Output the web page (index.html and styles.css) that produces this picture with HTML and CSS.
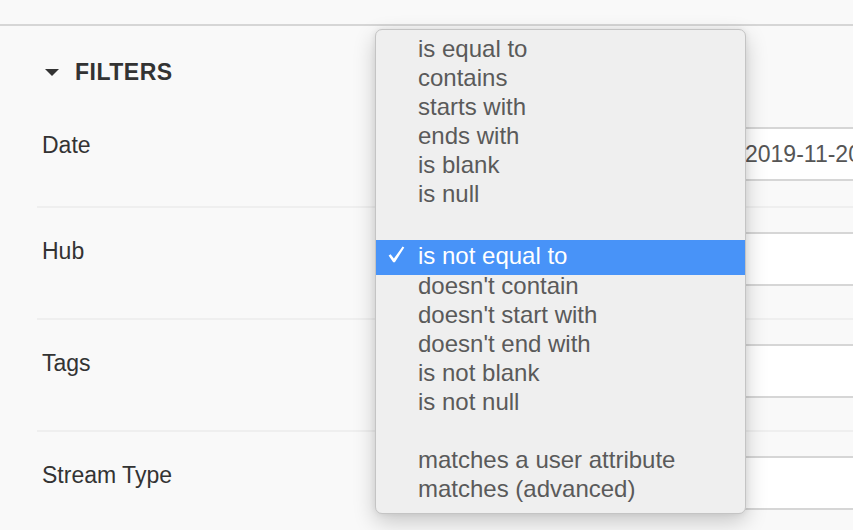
FILE: index.html
```html
<!DOCTYPE html>
<html lang="en">
<head>
<meta charset="utf-8">
<title>Filters</title>
<link rel="stylesheet" href="styles.css">
</head>
<body>
<div class="topbar"></div>
<section class="filters">
  <h2 class="filters-title">
    <svg class="caret" width="14" height="7" viewBox="0 0 14 7"><path d="M0 0H14L7 7Z" fill="#333"/></svg>
    <span>FILTERS</span>
  </h2>
  <div class="filter-row first">
    <div class="label">Date</div>
    <div class="field">2019-11-20</div>
  </div>
  <div class="filter-row">
    <div class="label">Hub</div>
    <div class="field"></div>
  </div>
  <div class="filter-row">
    <div class="label">Tags</div>
    <div class="field"></div>
  </div>
  <div class="filter-row">
    <div class="label">Stream Type</div>
    <div class="field"></div>
  </div>
</section>

<div class="menu">
  <div class="item">is equal to</div>
  <div class="item">contains</div>
  <div class="item">starts with</div>
  <div class="item">ends with</div>
  <div class="item">is blank</div>
  <div class="item">is null</div>
  <div class="sep-big"></div>
  <div class="item selected">
    <svg class="check" width="17" height="17" viewBox="0 0 17 17"><path d="M0.6 9.4 L2.6 8.3 L5.9 12.6 L14.6 0.4 L16.3 1.4 L6.9 16.2 L5.2 16.2 Z" fill="#fff"/></svg>
    is not equal to
  </div>
  <div class="item">doesn't contain</div>
  <div class="item">doesn't start with</div>
  <div class="item">doesn't end with</div>
  <div class="item">is not blank</div>
  <div class="item">is not null</div>
  <div class="sep"></div>
  <div class="item">matches a user attribute</div>
  <div class="item">matches (advanced)</div>
</div>
</body>
</html>
```
FILE: styles.css
```css
html, body {
  margin: 0;
  padding: 0;
  overflow: hidden;
}
body {
  width: 853px;
  height: 530px;
  background: #f9f9f9;
  font-family: "Liberation Sans", Arial, Helvetica, sans-serif;
  color: #333;
  position: relative;
}
.topbar {
  height: 24px;
  border-bottom: 2px solid #d6d6d6;
  background: #f9f9f9;
}
.filters {
  padding: 31px 0 0 37px;
}
.filters-title {
  margin: 0;
  height: 30px;
  display: flex;
  align-items: center;
  padding-left: 8px;
  font-size: 23px;
  font-weight: bold;
  letter-spacing: 0.5px;
  color: #333;
  line-height: 30px;
}
.caret {
  margin-right: 16px;
  margin-top: 1px;
}
.filter-row {
  display: grid;
  grid-template-columns: 663px 1fr;
  border-top: 2px solid #efefef;
  padding: 24px 0 32px;
}
.filter-row.first {
  border-top: none;
  padding: 40px 0 25px;
}
.label {
  padding: 6px 0 0 5px;
  font-size: 23px;
  line-height: 26px;
  color: #333;
}
.filter-row.first .label {
  padding-top: 5px;
}
.field {
  height: 50px;
  background: #fff;
  border-top: 2px solid #d6d6d6;
  border-bottom: 2px solid #d6d6d6;
  border-left: 2px solid #d6d6d6;
  padding-left: 43px;
  font-size: 23px;
  line-height: 50px;
  color: #555;
  white-space: nowrap;
  overflow: hidden;
}
.menu {
  position: absolute;
  left: 375px;
  top: 29px;
  width: 369px;
  height: 469px;
  padding: 4px 0 10px;
  background: #efefef;
  border: 1px solid #c4c4c4;
  border-radius: 7px;
  box-shadow: 0 8px 22px rgba(0, 0, 0, 0.2), 0 0 6px rgba(0, 0, 0, 0.08);
  overflow: hidden;
}
.item {
  position: relative;
  padding-left: 42px;
  height: 29px;
  font-size: 24px;
  line-height: 29px;
  color: #5a5a5a;
  white-space: nowrap;
}
.item.selected {
  background: #4893f8;
  color: #fff;
  margin-bottom: 1px;
  box-shadow: 0 -1px 0 #4893f8, 0 5px 0 #4893f8;
}
.check {
  position: absolute;
  left: 12px;
  top: 5px;
}
.sep-big {
  height: 33px;
}
.sep {
  height: 29px;
}
```
